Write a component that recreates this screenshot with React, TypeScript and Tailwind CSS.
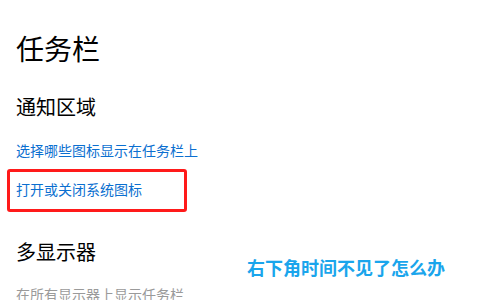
export default function App() {
  return (
    <div
      className="relative w-[484px] h-[300px] overflow-hidden bg-white"
      style={{ fontFamily: '"Noto Sans CJK SC", "Noto Sans", sans-serif' }}
    >
      <div className="flex flex-col pl-4">
        <div className="mt-[28px] text-[28px] leading-[40px] text-black">任务栏</div>
        <div className="mt-[25px] text-[20px] leading-[28px] text-black">通知区域</div>
        <div className="mt-[19px] text-[14px] leading-[20px] text-[#0b6fd0]">选择哪些图标显示在任务栏上</div>
        <div className="mt-[9px] -ml-[9px] w-[180px] rounded-[3px] border-[3px] border-[#ff1a1a] pl-[6px] pt-[7px] pb-[10px]">
          <div className="text-[14px] leading-[20px] text-[#0b6fd0]">打开或关闭系统图标</div>
        </div>
        <div className="mt-[26px] text-[20px] leading-[28px] text-black">多显示器</div>
        <div className="mt-[18px] text-[14px] leading-[20px] text-[#9a9a9a]">在所有显示器上显示任务栏</div>
      </div>
      <div className="absolute left-[247px] top-[258px] text-[18px] leading-[18px] font-bold text-[#1aa5ec]">
        右下角时间不见了怎么办
      </div>
    </div>
  );
}
